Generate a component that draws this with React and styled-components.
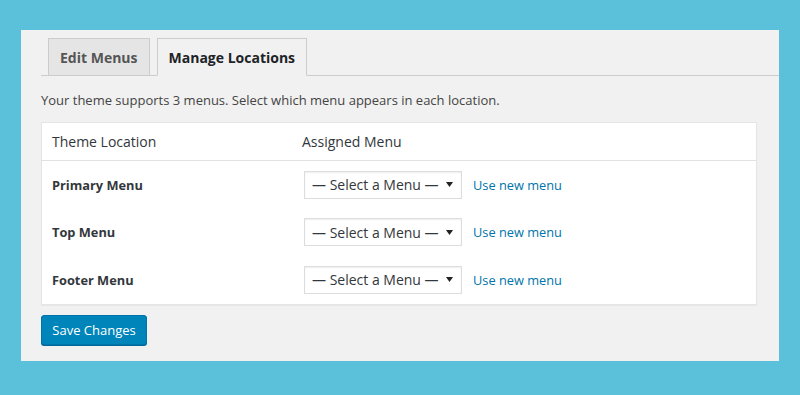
import React from 'react';
import styled, { createGlobalStyle } from 'styled-components';

const GlobalStyle = createGlobalStyle`
    html, body {
        margin: 0;
        padding: 0;
        background: #5bc0da;
        font-family: "Open Sans", "Noto Sans", sans-serif;
    }
    * { box-sizing: border-box; }
`;

const Page = styled.div`
    width: 800px;
    height: 395px;
    padding: 30px 21px 0 21px;
`;

const Panel = styled.div`
    background: #f1f1f1;
    height: 331px;
    padding-top: 8px;
    display: flex;
    flex-direction: column;
`;

const TabBar = styled.div`
    display: flex;
    gap: 7px;
    margin-left: 20px;
    padding-left: 7px;
    border-bottom: 1px solid #ccc;
`;

const Tab = styled.div`
    height: 38px;
    margin-bottom: -1px;
    padding: 0 11px;
    display: flex;
    align-items: center;
    font-size: 14px;
    font-weight: 700;
    border: 1px solid #ccc;
    border-bottom-color: ${(p) => (p.$active ? '#f1f1f1' : '#ccc')};
    background: ${(p) => (p.$active ? '#f1f1f1' : '#e5e5e5')};
    color: ${(p) => (p.$active ? '#1d2327' : '#555')};
`;

const Content = styled.div`
    padding: 0 22px 0 20px;
`;

const Intro = styled.p`
    margin: 15px 0 13px;
    font-size: 13px;
    color: #444;
    line-height: 18px;
`;

const Table = styled.div`
    background: #fff;
    border: 1px solid #e5e5e5;
    box-shadow: 0 1px 1px rgba(0, 0, 0, 0.04);
`;

const HeadRow = styled.div`
    display: grid;
    grid-template-columns: 250px 1fr;
    height: 38px;
    align-items: center;
    border-bottom: 1px solid #e1e1e1;
    font-size: 14px;
    color: #32373c;
    padding-left: 10px;
`;

const Row = styled.div`
    display: grid;
    grid-template-columns: 250px 1fr;
    height: 47.6px;
    align-items: center;
    padding-left: 10px;
`;

const Location = styled.div`
    font-size: 12.8px;
    font-weight: 700;
    color: #32373c;
`;

const Assign = styled.div`
    display: flex;
    align-items: center;
    gap: 11px;
    padding-left: 2px;
`;

const FakeSelect = styled.div`
    width: 158px;
    height: 28px;
    background: #fff;
    border: 1px solid #ddd;
    box-shadow: inset 0 1px 2px rgba(0, 0, 0, 0.07);
    display: flex;
    align-items: center;
    justify-content: space-between;
    padding: 0 8px 0 7px;
    font-size: 14px;
    color: #32373c;
`;

const NewLink = styled.a`
    font-size: 12.8px;
    color: #0073aa;
    text-decoration: none;
`;

const SaveButton = styled.button`
    margin-top: 10px;
    width: 106px;
    height: 30px;
    background: #0085ba;
    border: 1px solid #0073aa;
    border-radius: 3px;
    box-shadow: 0 1px 0 #006799;
    color: #fff;
    font-family: inherit;
    font-size: 13px;
    padding: 0;
    cursor: pointer;
`;

const locations = ['Primary Menu', 'Top Menu', 'Footer Menu'];

export default function App() {
    return (
        <>
            <GlobalStyle />
            <Page>
                <Panel>
                    <TabBar>
                        <Tab>Edit Menus</Tab>
                        <Tab $active>Manage Locations</Tab>
                    </TabBar>
                    <Content>
                        <Intro>Your theme supports 3 menus. Select which menu appears in each location.</Intro>
                        <Table>
                            <HeadRow>
                                <div>Theme Location</div>
                                <div>Assigned Menu</div>
                            </HeadRow>
                            {locations.map((name) => (
                                <Row key={name}>
                                    <Location>{name}</Location>
                                    <Assign>
                                        <FakeSelect>
                                            <span>— Select a Menu —</span>
                                            <svg width="7" height="5" viewBox="0 0 7 5">
                                                <path d="M0 0 H7 L3.5 5 Z" fill="#222" />
                                            </svg>
                                        </FakeSelect>
                                        <NewLink href="#">Use new menu</NewLink>
                                    </Assign>
                                </Row>
                            ))}
                        </Table>
                        <SaveButton>Save Changes</SaveButton>
                    </Content>
                </Panel>
            </Page>
        </>
    );
}
